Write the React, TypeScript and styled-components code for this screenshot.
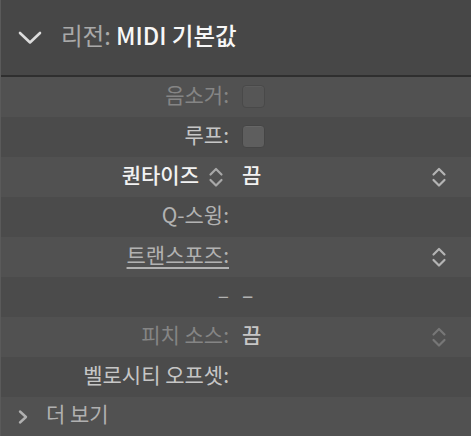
import React from 'react';
import styled, { createGlobalStyle } from 'styled-components';

const GlobalStyle = createGlobalStyle`
  html, body {
    margin: 0;
    padding: 0;
    background: #4f4f4f;
  }
  body {
    font-family: "Noto Sans CJK KR", "Noto Sans", sans-serif;
  }
`;

type Tone = 'dim' | 'muted' | 'normal' | 'bright';

const toneColor: Record<Tone, string> = {
  dim: '#858585',
  muted: '#b2b2b2',
  normal: '#c6c6c6',
  bright: '#f2f2f2',
};

interface RowDef {
  label: string;
  tone: Tone;
  kind: 'checkbox' | 'popup' | 'text' | 'none';
  value?: string;
  valueTone?: Tone;
  underline?: boolean;
  labelMenu?: boolean;
  stepperDim?: boolean;
}

const rows: RowDef[] = [
  { label: '음소거:', tone: 'dim', kind: 'checkbox' },
  { label: '루프:', tone: 'normal', kind: 'checkbox' },
  { label: '퀀타이즈', tone: 'bright', kind: 'popup', value: '끔', valueTone: 'bright', labelMenu: true },
  { label: 'Q-스윙:', tone: 'muted', kind: 'none' },
  { label: '트랜스포즈:', tone: 'muted', kind: 'popup', value: '', underline: true },
  { label: '–', tone: 'muted', kind: 'text', value: '–', valueTone: 'muted' },
  { label: '피치 소스:', tone: 'dim', kind: 'popup', value: '끔', valueTone: 'normal', stepperDim: true },
  { label: '벨로시티 오프셋:', tone: 'normal', kind: 'none' },
];

const Stepper: React.FC<{ color: string }> = ({ color }) => (
  <svg width="16" height="24" viewBox="0 0 16 24" fill="none">
    <path d="M2.5 9.5 L8 4 L13.5 9.5" stroke={color} strokeWidth="2.2" strokeLinecap="round" strokeLinejoin="round" />
    <path d="M2.5 15 L8 20.5 L13.5 15" stroke={color} strokeWidth="2.2" strokeLinecap="round" strokeLinejoin="round" />
  </svg>
);

const App: React.FC = () => {
  return (
    <>
      <GlobalStyle />
      <Panel>
        <Header>
          <svg width="24" height="14" viewBox="0 0 24 14" fill="none">
            <path d="M2 2 L12 11.5 L22 2" stroke="#dcdcdc" strokeWidth="2.6" strokeLinecap="round" strokeLinejoin="round" />
          </svg>
          <Title>
            <TitleKey>리전:</TitleKey> <TitleName>MIDI 기본값</TitleName>
          </Title>
        </Header>
        <Body>
          {rows.map((row, i) => (
            <Row key={i} $odd={i % 2 === 1}>
              <Label $tone={row.tone} $underline={row.underline}>
                {row.label}
                {row.labelMenu && (
                  <LabelMenu>
                    <Stepper color="#a8a8a8" />
                  </LabelMenu>
                )}
              </Label>
              <Value>
                {row.kind === 'checkbox' && <Checkbox $dim={row.tone === 'dim'} />}
                {(row.kind === 'popup' || row.kind === 'text') && row.value && (
                  <ValueText $tone={row.valueTone || 'normal'}>{row.value}</ValueText>
                )}
              </Value>
              <Side>
                {row.kind === 'popup' && <Stepper color={row.stepperDim ? '#777777' : '#b4b4b4'} />}
              </Side>
            </Row>
          ))}
          <MoreRow $odd={false}>
            <svg width="12" height="16" viewBox="0 0 12 16" fill="none">
              <path d="M3 2.5 L9 8 L3 13.5" stroke="#b0b0b0" strokeWidth="2.4" strokeLinecap="round" strokeLinejoin="round" />
            </svg>
            <MoreText>더 보기</MoreText>
          </MoreRow>
        </Body>
      </Panel>
    </>
  );
};

const Panel = styled.div`
  width: 471px;
  height: 436px;
  overflow: hidden;
  background: #4f4f4f;
  border-left: 1px solid #5a5a5a;
  box-sizing: border-box;
`;

const Header = styled.div`
  height: 75px;
  display: flex;
  align-items: center;
  gap: 19px;
  padding-left: 17px;
  background: #474747;
  border-bottom: 2px solid #2f2f2f;
`;

const Title = styled.div`
  font-size: 23.5px;
  line-height: 1;
  white-space: pre;
  padding-bottom: 3px;
`;

const TitleKey = styled.span`
  color: #a9a9a9;
`;

const TitleName = styled.span`
  color: #f7f7f7;
  font-weight: 500;
`;

const Body = styled.div`
  display: flex;
  flex-direction: column;
`;

const Row = styled.div<{ $odd: boolean }>`
  height: 40px;
  display: grid;
  grid-template-columns: 228px 1fr 16px;
  column-gap: 13px;
  align-items: center;
  padding-right: 24px;
  background: ${(p) => (p.$odd ? '#4b4b4b' : '#515151')};
`;

const Label = styled.div<{ $tone: Tone; $underline?: boolean }>`
  justify-self: end;
  display: flex;
  align-items: center;
  font-size: 21px;
  line-height: 1;
  padding-bottom: 6px;
  color: ${(p) => toneColor[p.$tone]};
  font-weight: ${(p) => (p.$tone === 'bright' ? 500 : 400)};
  text-decoration: ${(p) => (p.$underline ? 'underline' : 'none')};
  text-underline-offset: 4px;
  white-space: pre;
`;

const LabelMenu = styled.span`
  display: inline-flex;
  margin-left: 9px;
  margin-right: 5px;
  padding-top: 6px;
`;

const Value = styled.div`
  display: flex;
  align-items: center;
  min-width: 0;
`;

const ValueText = styled.span<{ $tone: Tone }>`
  font-size: 21px;
  line-height: 1;
  padding-bottom: 6px;
  color: ${(p) => toneColor[p.$tone]};
  font-weight: 500;
`;

const Checkbox = styled.div<{ $dim?: boolean }>`
  width: 23px;
  height: 23px;
  box-sizing: border-box;
  border-radius: 4px;
  background: ${(p) => (p.$dim ? '#565656' : '#5e5e5e')};
  border: 1px solid ${(p) => (p.$dim ? '#494949' : '#454545')};
  box-shadow: inset 0 1px 0 ${(p) => (p.$dim ? '#5c5c5c' : '#666666')};
  margin-top: -2px;
`;

const Side = styled.div`
  display: flex;
  align-items: center;
  justify-content: center;
`;

const MoreRow = styled(Row)`
  display: flex;
  align-items: center;
  gap: 17px;
  padding-left: 16px;
  height: 39px;
`;

const MoreText = styled.span`
  font-size: 21px;
  line-height: 1;
  padding-bottom: 6px;
  color: #b0b0b0;
`;

export default App;
